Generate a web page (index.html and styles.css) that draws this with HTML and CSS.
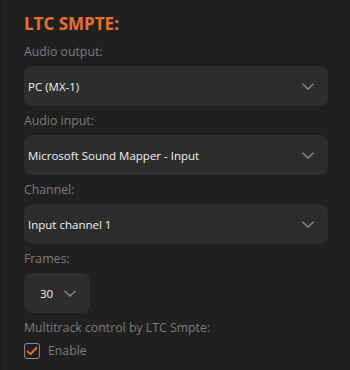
FILE: index.html
```html
<!DOCTYPE html>
<html>
<head>
	<meta charset="UTF-8">
	<title>LTC SMPTE</title>
	<link rel="stylesheet" href="styles.css">
</head>
<body>

	<div class="panel">

		<div class="panel_title">LTC SMPTE:</div>

		<div class="field_label">Audio output:</div>
		<div class="select_box">
			<span class="select_text">PC (MX-1)</span>
			<svg class="chevron" width="12" height="7" viewBox="0 0 12 7"><path d="M0.5 0.8 L6 6 L11.5 0.8" fill="none" stroke="#8a8a8a" stroke-width="1.3"/></svg>
		</div>

		<div class="field_label">Audio input:</div>
		<div class="select_box">
			<span class="select_text">Microsoft Sound Mapper - Input</span>
			<svg class="chevron" width="12" height="7" viewBox="0 0 12 7"><path d="M0.5 0.8 L6 6 L11.5 0.8" fill="none" stroke="#8a8a8a" stroke-width="1.3"/></svg>
		</div>

		<div class="field_label">Channel:</div>
		<div class="select_box">
			<span class="select_text">Input channel 1</span>
			<svg class="chevron" width="12" height="7" viewBox="0 0 12 7"><path d="M0.5 0.8 L6 6 L11.5 0.8" fill="none" stroke="#8a8a8a" stroke-width="1.3"/></svg>
		</div>

		<div class="field_label">Frames:</div>
		<div class="select_box small">
			<span class="select_text">30</span>
			<svg class="chevron" width="12" height="7" viewBox="0 0 12 7"><path d="M0.5 0.8 L6 6 L11.5 0.8" fill="none" stroke="#8a8a8a" stroke-width="1.3"/></svg>
		</div>

		<div class="field_label">Multitrack control by LTC Smpte:</div>
		<label class="check_row">
			<span class="check_box">
				<svg width="12" height="10" viewBox="0 0 12 10"><path d="M1.2 5 L4.5 8.2 L10.8 1.5" fill="none" stroke="#e8702a" stroke-width="2"/></svg>
			</span>
			<span class="check_text">Enable</span>
		</label>

	</div>

</body>
</html>
```

FILE: styles.css
```css
html, body{
	margin: 0;
	padding: 0;
	background: #202020;
}

.panel{
	width: 348px;
	height: 370px;
	border-left: 2px solid #1a1a21;
	padding: 10px 22px 0 22px;
	box-sizing: border-box;
	font-family: "Open Sans", "Noto Sans", sans-serif;
}

.panel_title{
	color: #e8702a;
	font-size: 17px;
	font-weight: bold;
	line-height: 27px;
	margin-bottom: 0;
}

.field_label{
	color: #7c7c7c;
	font-size: 12.3px;
	line-height: 19px;
	margin: 5px 0 5px 0;
}

.select_box{
	display: flex;
	align-items: center;
	justify-content: space-between;
	height: 40px;
	width: 304px;
	box-sizing: border-box;
	padding: 0 14px 0 4px;
	background: #2d2d2d;
	border-radius: 8px;
}

.select_box.small{
	width: 66px;
	padding: 0 14px 0 16px;
}

.select_text{
	color: #f2f2f2;
	font-size: 11.5px;
}

.check_row{
	display: flex;
	align-items: center;
	gap: 8px;
	margin-top: 5px;
}

.check_box{
	display: flex;
	align-items: center;
	justify-content: center;
	width: 16px;
	height: 16px;
	box-sizing: border-box;
	border: 1px solid #8a8a8a;
	border-radius: 3px;
}

.check_text{
	color: #7c7c7c;
	font-size: 12.3px;
}
```
